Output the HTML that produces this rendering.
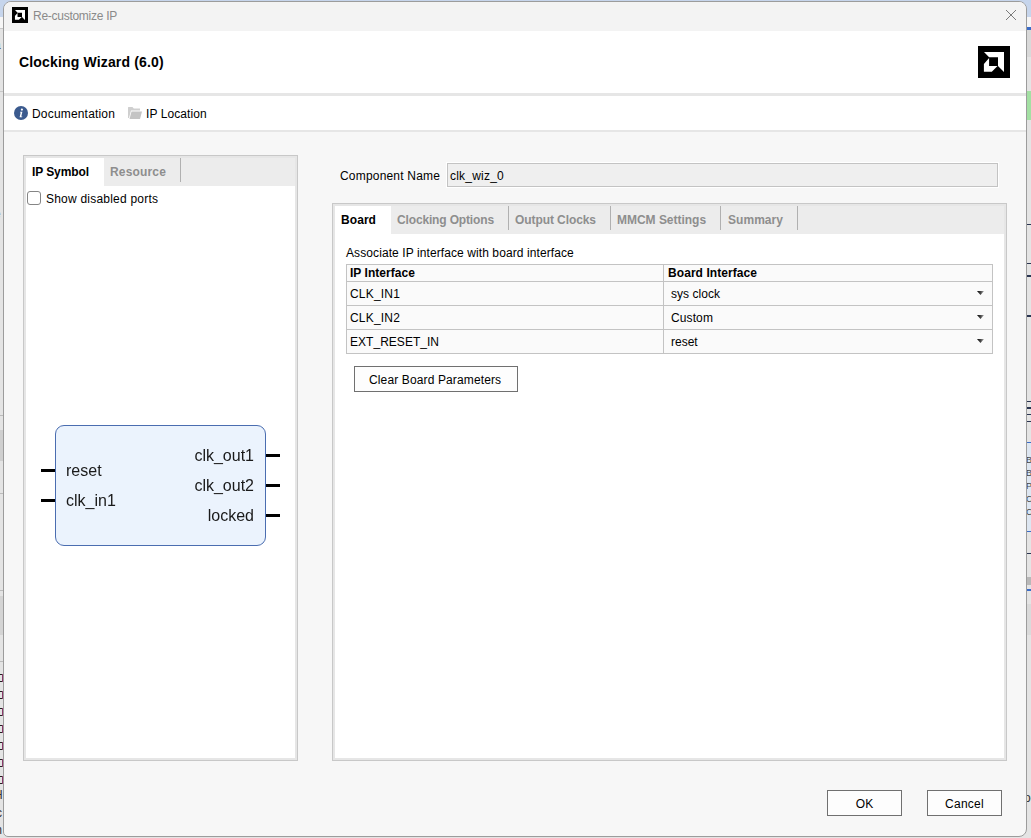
<!DOCTYPE html>
<html><head><meta charset="utf-8">
<style>
*{margin:0;padding:0;box-sizing:border-box;}
html,body{width:1031px;height:838px;overflow:hidden;background:#e4e4e4;font-family:"Liberation Sans",sans-serif;color:#000;}
.a{position:absolute;}
.t{position:absolute;white-space:nowrap;font-size:12px;line-height:12px;}
.b{font-weight:bold;}
.g{color:#8e8e8e;}
</style></head><body>
<!-- background app strips -->
<div class="a" style="left:0;top:0;width:1031px;height:17px;background:#c6d5ec"></div>
<div class="a" style="left:0;top:17px;width:1031px;height:11px;background:#f6f6f6"></div>
<div class="a" style="left:0;top:28px;width:1031px;height:1px;background:#c8c8c8"></div>
<div class="a" style="left:1027px;top:27px;width:4px;height:3px;background:#3a6cc8"></div>
<div class="a" style="left:1027px;top:30px;width:4px;height:27px;background:#d9d9d9"></div>
<div class="a" style="left:0;top:91px;width:4px;height:1px;background:#c8c8c8"></div>
<div class="t" style="left:-6px;top:39px;color:#333">a</div>
<div class="t" style="left:-6px;top:208px;color:#777">e</div>
<div class="a" style="left:1027px;top:91px;width:4px;height:29px;background:#a3e0a3"></div>
<div class="a" style="left:1027px;top:224px;width:4px;height:1px;background:#2a3550"></div>
<div class="a" style="left:1027px;top:263px;width:4px;height:1px;background:#2a3550"></div>
<div class="a" style="left:1027px;top:275px;width:4px;height:2px;background:#2a3550"></div>
<div class="a" style="left:1027px;top:315px;width:4px;height:2px;background:#2a3550"></div>
<div class="a" style="left:1027px;top:401px;width:4px;height:1px;background:#2a3550"></div>
<div class="a" style="left:1027px;top:407px;width:4px;height:2px;background:#2a3550"></div>
<div class="a" style="left:1027px;top:414px;width:4px;height:1px;background:#2a3550"></div><div class="a" style="left:1027px;top:421px;width:4px;height:1px;background:#2a3550"></div>
<div class="a" style="left:1027px;top:442px;width:4px;height:90px;background:#dde6f1;border-top:1px solid #3a6cc8;border-bottom:1px solid #3a6cc8"></div>
<div class="a" style="left:1027px;top:553px;width:4px;height:1px;background:#2a3550"></div>
<div class="a" style="left:1027px;top:577px;width:4px;height:8px;background:#b8b8b8"></div>
<div class="a" style="left:1027px;top:589px;width:4px;height:2px;background:#3a6cc8"></div>
<div class="a" style="left:1027px;top:604px;width:4px;height:31px;background:#dadada"></div>
<div class="a" style="left:0;top:415px;width:3px;height:1px;background:#bbb"></div>
<div class="a" style="left:0;top:430px;width:3px;height:31px;background:#cfcfcf"></div>
<div class="a" style="left:0;top:493px;width:3px;height:1px;background:#bbb"></div>
<div class="a" style="left:0;top:590px;width:3px;height:1px;background:#bbb"></div>
<div class="a" style="left:0;top:596px;width:3px;height:39px;background:#d4d4d4"></div>
<div class="a" style="left:0;top:661px;width:3px;height:1px;background:#bbb"></div>
<div class="a" style="left:0;top:674px;width:3px;height:8px;border-top:1px solid #222;border-bottom:1px solid #222"></div><div class="a" style="left:2px;top:674px;width:1px;height:8px;background:#8a3a6a"></div>
<div class="a" style="left:0;top:691px;width:3px;height:8px;border-top:1px solid #222;border-bottom:1px solid #222"></div><div class="a" style="left:2px;top:691px;width:1px;height:8px;background:#8a3a6a"></div>
<div class="a" style="left:0;top:708px;width:3px;height:8px;border-top:1px solid #222;border-bottom:1px solid #222"></div><div class="a" style="left:2px;top:708px;width:1px;height:8px;background:#8a3a6a"></div>
<div class="a" style="left:0;top:725px;width:3px;height:8px;border-top:1px solid #222;border-bottom:1px solid #222"></div><div class="a" style="left:2px;top:725px;width:1px;height:8px;background:#8a3a6a"></div>
<div class="a" style="left:0;top:742px;width:3px;height:8px;border-top:1px solid #222;border-bottom:1px solid #222"></div><div class="a" style="left:2px;top:742px;width:1px;height:8px;background:#8a3a6a"></div>
<div class="a" style="left:0;top:759px;width:3px;height:8px;border-top:1px solid #222;border-bottom:1px solid #222"></div><div class="a" style="left:2px;top:759px;width:1px;height:8px;background:#8a3a6a"></div>
<div class="a" style="left:0;top:776px;width:3px;height:8px;border-top:1px solid #222;border-bottom:1px solid #222"></div><div class="a" style="left:2px;top:776px;width:1px;height:8px;background:#8a3a6a"></div>
<div class="t" style="left:-6px;top:789px;color:#333">H</div>
<div class="t" style="left:-4px;top:807px;color:#333">c</div>
<div class="t" style="left:-8px;top:824px;color:#333">m</div>
<div class="t" style="left:1026px;top:456px;color:#444;font-size:9px;line-height:9px">B</div>
<div class="t" style="left:1026px;top:469px;color:#444;font-size:9px;line-height:9px">B</div>
<div class="t" style="left:1026px;top:482px;color:#444;font-size:9px;line-height:9px">P</div>
<div class="t" style="left:1026px;top:495px;color:#444;font-size:9px;line-height:9px">C</div>
<div class="t" style="left:1026px;top:508px;color:#444;font-size:9px;line-height:9px">C</div>
<div class="t" style="left:1024px;top:792px;color:#333">oc</div>

<!-- window -->
<div class="a" id="win" style="left:3px;top:1px;width:1024px;height:836px;border:1px solid #9c9c9c;border-radius:8px 8px 8px 5px;background:#f7f7f7;overflow:hidden">
  <div class="a" style="left:0;top:0;width:1022px;height:29px;background:#f3f3f3"></div>
  <div class="a" style="left:0;top:29px;width:1022px;height:62px;background:#fff"></div>
  <div class="a" style="left:0;top:91px;width:1022px;height:3px;background:#e6e6e6"></div>
  <div class="a" style="left:0;top:94px;width:1022px;height:34px;background:#fff"></div>
  <div class="a" style="left:0;top:128px;width:1022px;height:2px;background:#e6e6e6"></div>
</div>

<!-- title bar icon -->
<svg class="a" style="left:12px;top:7px" width="16" height="16" viewBox="0 0 32 32">
  <rect width="32" height="32" fill="#000"/>
  <polygon points="6,6 26,6 26,26 20,20 20,11.3 11.1,11.3" fill="#fff"/>
  <polygon points="11.1,12 11.1,19.9 19.5,19.9 13.8,25.7 5.9,25.7 5.9,18.1" fill="#fff"/>
</svg>
<div class="t g" style="left:33px;top:9.6px;font-size:12px;color:#8a8a8a;letter-spacing:-0.27px">Re-customize IP</div>
<svg class="a" style="left:1005px;top:9px" width="12" height="12" viewBox="0 0 12 12">
  <path d="M1 1L11 11M11 1L1 11" stroke="#7a7a7a" stroke-width="1"/>
</svg>

<!-- header -->
<div class="t b" style="left:19px;top:55px;font-size:14px;line-height:14px;letter-spacing:0.16px">Clocking Wizard (6.0)</div>
<svg class="a" style="left:978px;top:46px" width="32" height="32" viewBox="0 0 32 32">
  <rect width="32" height="32" fill="#000"/>
  <polygon points="6,6 26,6 26,26 20,20 20,11.3 11.1,11.3" fill="#fff"/>
  <polygon points="11.1,12 11.1,19.9 19.5,19.9 13.8,25.7 5.9,25.7 5.9,18.1" fill="#fff"/>
</svg>

<!-- toolbar -->
<svg class="a" style="left:14px;top:106px" width="14" height="14" viewBox="0 0 14 14">
  <circle cx="7" cy="7" r="7" fill="#3b5a8e"/>
  <circle cx="7.9" cy="3.6" r="1.1" fill="#fff"/>
  <path d="M6.2 5.8 H8.4 L7.3 10.6 H8.3 L8.1 11.3 H5.6 L6.7 6.5 H6.0 Z" fill="#fff"/>
</svg>
<div class="t" style="left:32px;top:108px;letter-spacing:0.18px">Documentation</div>
<svg class="a" style="left:128px;top:106px" width="14" height="13" viewBox="0 0 14 13">
  <path d="M0 1.5 Q0 1 0.5 1 H4.5 L5.8 2.4 H12 V4.5 H3 L1 12 H0 Z" fill="#cfcfcf"/>
  <path d="M3.5 5.5 H14 L12 13 H1.5 Z" fill="#c4c4c4"/>
</svg>
<div class="t" style="left:146px;top:108px;letter-spacing:0.09px">IP Location</div>

<!-- left panel -->
<div class="a" style="left:23px;top:155px;width:275px;height:606px;border:1px solid #c8c8c8;background:#e6e6e6;padding:2px">
  <div class="a" style="left:2px;top:2px;width:269px;height:600px;background:#fff"></div>
  <div class="a" style="left:2px;top:2px;width:269px;height:28px;background:#ececec"></div>
  <div class="a" style="left:2px;top:2px;width:78px;height:28px;background:#fff"></div>
  <div class="a" style="left:156px;top:2px;width:1px;height:24px;background:#b0b0b0"></div>
</div>
<div class="t b" style="left:32px;top:166px;letter-spacing:-0.1px">IP Symbol</div>
<div class="t b g" style="left:110px;top:166px;letter-spacing:0.16px">Resource</div>
<div class="a" style="left:27px;top:191px;width:14px;height:14px;border:1.5px solid #858585;border-radius:3px;background:#fff"></div>
<div class="t" style="left:46px;top:193px;letter-spacing:0.22px">Show disabled ports</div>

<!-- IP symbol -->
<div class="a" style="left:55px;top:425px;width:211px;height:121px;border:1px solid #4a6db0;border-radius:9px;background:#ebf3fd"></div>
<div class="a" style="left:41px;top:469px;width:14px;height:3px;background:#000"></div>
<div class="a" style="left:41px;top:499px;width:14px;height:3px;background:#000"></div>
<div class="a" style="left:266px;top:454px;width:14px;height:3px;background:#000"></div>
<div class="a" style="left:266px;top:484px;width:14px;height:3px;background:#000"></div>
<div class="a" style="left:266px;top:514px;width:14px;height:3px;background:#000"></div>
<div class="t" style="left:66px;top:463px;font-size:16px;line-height:16px;color:#1a1a1a;will-change:transform">reset</div>
<div class="t" style="left:66px;top:493px;font-size:16px;line-height:16px;color:#1a1a1a;will-change:transform">clk_in1</div>
<div class="t" style="left:151px;width:103px;text-align:right;top:448px;font-size:16px;line-height:16px;color:#1a1a1a;will-change:transform">clk_out1</div>
<div class="t" style="left:151px;width:103px;text-align:right;top:478px;font-size:16px;line-height:16px;color:#1a1a1a;will-change:transform">clk_out2</div>
<div class="t" style="left:151px;width:103px;text-align:right;top:508px;font-size:16px;line-height:16px;color:#1a1a1a;will-change:transform">locked</div>

<!-- component name -->
<div class="t" style="left:340px;top:170px;letter-spacing:0.19px">Component Name</div>
<div class="a" style="left:446px;top:162px;width:553px;height:26px;border:1px solid #fff"></div>
<div class="a" style="left:447px;top:163px;width:551px;height:24px;border:1px solid #c3c3c3;background:#efefef"></div>
<div class="t" style="left:450px;top:170px;letter-spacing:0.22px">clk_wiz_0</div>

<!-- right panel -->
<div class="a" style="left:332px;top:203px;width:675px;height:558px;border:1px solid #c8c8c8;background:#e6e6e6">
  <div class="a" style="left:2px;top:2px;width:669px;height:552px;background:#fff"></div>
  <div class="a" style="left:2px;top:2px;width:669px;height:28px;background:#ececec"></div>
  <div class="a" style="left:2px;top:2px;width:56px;height:28px;background:#fff"></div>
  <div class="a" style="left:175px;top:2px;width:1px;height:24px;background:#b0b0b0"></div>
  <div class="a" style="left:277px;top:2px;width:1px;height:24px;background:#b0b0b0"></div>
  <div class="a" style="left:387px;top:2px;width:1px;height:24px;background:#b0b0b0"></div>
  <div class="a" style="left:464px;top:2px;width:1px;height:24px;background:#b0b0b0"></div>
</div>
<div class="t b" style="left:341px;top:214px;letter-spacing:0.07px">Board</div>
<div class="t b g" style="left:397px;top:214px;letter-spacing:-0.15px">Clocking Options</div>
<div class="t b g" style="left:515px;top:214px;letter-spacing:-0.08px">Output Clocks</div>
<div class="t b g" style="left:617px;top:214px;letter-spacing:-0.02px">MMCM Settings</div>
<div class="t b g" style="left:728px;top:214px;letter-spacing:0.05px">Summary</div>

<div class="t" style="left:346px;top:247px;letter-spacing:0.09px">Associate IP interface with board interface</div>

<!-- table -->
<div class="a" style="left:346px;top:264px;width:647px;height:90px;border:1px solid #c3c3c3;background:#fafafa"></div>
<div class="a" style="left:347px;top:281px;width:645px;height:1px;background:#c3c3c3"></div>
<div class="a" style="left:347px;top:305px;width:645px;height:1px;background:#c3c3c3"></div>
<div class="a" style="left:347px;top:329px;width:645px;height:1px;background:#c3c3c3"></div>
<div class="a" style="left:663px;top:265px;width:1px;height:88px;background:#c3c3c3"></div>
<div class="t b" style="left:350px;top:267px;letter-spacing:0.03px">IP Interface</div>
<div class="t b" style="left:668px;top:267px;letter-spacing:0.07px">Board Interface</div>
<div class="t" style="left:350px;top:288px;letter-spacing:0.19px">CLK_IN1</div>
<div class="t" style="left:350px;top:312px;letter-spacing:0.19px">CLK_IN2</div>
<div class="t" style="left:350px;top:336px;letter-spacing:0.03px">EXT_RESET_IN</div>
<div class="t" style="left:671px;top:288px;letter-spacing:0.04px">sys clock</div>
<div class="t" style="left:671px;top:312px;letter-spacing:0.11px">Custom</div>
<div class="t" style="left:671px;top:336px">reset</div>
<svg class="a" style="left:977px;top:291px" width="8" height="5" viewBox="0 0 8 5"><defs><linearGradient id="ag" x1="0" y1="0" x2="1" y2="0"><stop offset="0" stop-color="#000"/><stop offset="0.5" stop-color="#444"/><stop offset="1" stop-color="#aaa"/></linearGradient></defs><path d="M0 0H7L3.5 4Z" fill="url(#ag)"/></svg>
<svg class="a" style="left:977px;top:315px" width="8" height="5" viewBox="0 0 8 5"><defs><linearGradient id="ag" x1="0" y1="0" x2="1" y2="0"><stop offset="0" stop-color="#000"/><stop offset="0.5" stop-color="#444"/><stop offset="1" stop-color="#aaa"/></linearGradient></defs><path d="M0 0H7L3.5 4Z" fill="url(#ag)"/></svg>
<svg class="a" style="left:977px;top:339px" width="8" height="5" viewBox="0 0 8 5"><defs><linearGradient id="ag" x1="0" y1="0" x2="1" y2="0"><stop offset="0" stop-color="#000"/><stop offset="0.5" stop-color="#444"/><stop offset="1" stop-color="#aaa"/></linearGradient></defs><path d="M0 0H7L3.5 4Z" fill="url(#ag)"/></svg>

<!-- clear button -->
<div class="a" style="left:354px;top:366px;width:164px;height:26px;border:1px solid #707070;background:#fdfdfd"></div>
<div class="t" style="left:369px;top:374px;letter-spacing:0.13px">Clear Board Parameters</div>

<!-- OK Cancel -->
<div class="a" style="left:827px;top:790px;width:75px;height:26px;border:1px solid #707070;background:#fdfdfd"></div>
<div class="t" style="left:827px;width:75px;text-align:center;top:798px;letter-spacing:0px">OK</div>
<div class="a" style="left:927px;top:790px;width:75px;height:26px;border:1px solid #707070;background:#fdfdfd"></div>
<div class="t" style="left:927px;width:75px;text-align:center;top:798px;letter-spacing:0.27px">Cancel</div>
</body></html>
